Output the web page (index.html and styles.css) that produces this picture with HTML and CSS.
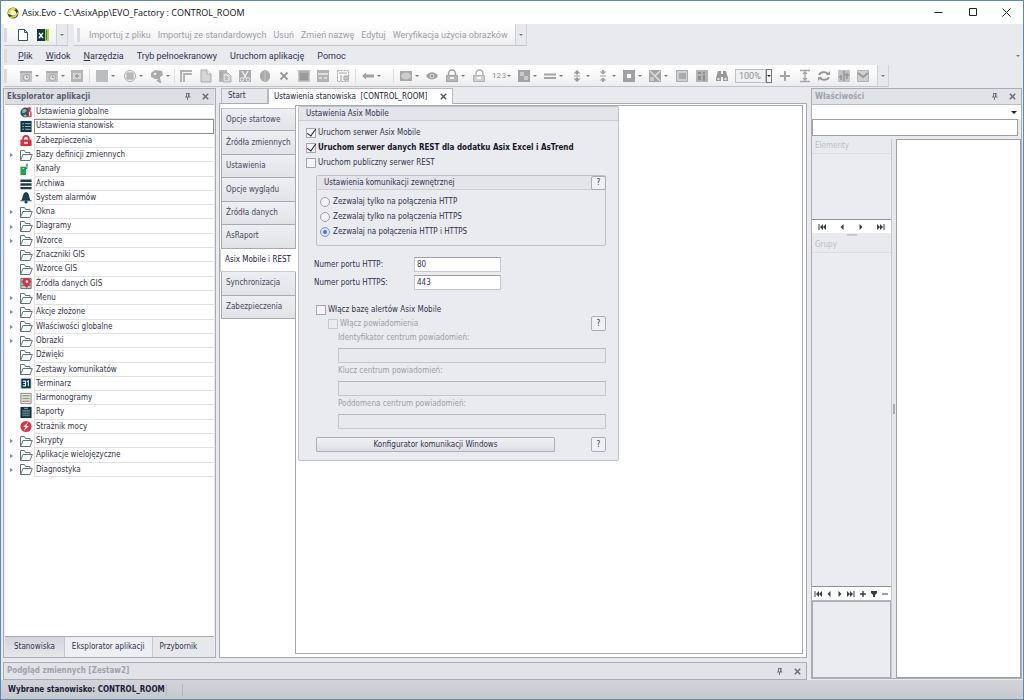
FILE: index.html
```html
<!DOCTYPE html>
<html lang="pl">
<head>
<meta charset="utf-8">
<title>Asix.Evo</title>
<link rel="stylesheet" href="styles.css">
</head>
<body>
<svg class="defs" aria-hidden="true">
  <symbol id="folder" viewBox="0 0 14 13"><path d="M1.500 11.500V1.500h4l1 2h4.500v2M1.500 11.500l2.500-6h9.300l-2.300 6z" fill="#fff" stroke="#5d747e"/></symbol>
  <symbol id="pin" viewBox="0 0 7 7"><path d="M2 0.500h3.500M2.500 0v4M4.500 0v4M5 0v4M1 4h5.500M3.500 4v3" stroke="currentColor" fill="none" stroke-width="0.900"/></symbol>
  <symbol id="x" viewBox="0 0 7 7"><path d="M0.800 0.800l5.400 5.400M6.200 0.800l-5.400 5.400" stroke="currentColor" stroke-width="1.500"/></symbol>
  <symbol id="cal" viewBox="0 0 14 14"><path d="M1 2h12v11H1z" fill="#c3c4c6"/><path d="M1 2h12v2H1z" fill="#adaeb0"/><circle cx="7.500" cy="8.500" r="3.200" fill="#dcdcde" stroke="#a3a4a6"/><path d="M7.500 6.500v2h1.500" stroke="#999" fill="none"/></symbol>
  <symbol id="boxplus" viewBox="0 0 14 14"><path d="M1 1h12v12H1z" fill="#b4b5b7"/><path d="M3 4h8v6H3z" fill="#d6d6d8"/><path d="M5 7h4M7 5v4" stroke="#999" stroke-width="1.500"/></symbol>
  <symbol id="sq" viewBox="0 0 14 14"><path d="M1 1h12v12H1z" fill="#bcbdbf"/></symbol>
  <symbol id="ring" viewBox="0 0 14 14"><circle cx="7" cy="7" r="5.500" fill="none" stroke="#aaabad"/><path d="M4 4h6v6H4z" fill="#d0d0d2" stroke="#a2a3a5"/><path d="M5 6h4M5 8h4" stroke="#a2a3a5"/></symbol>
  <symbol id="tag" viewBox="0 0 14 14"><path d="M1 4l4-3 7 1 1 4-5 4H5L1 8z" fill="#aaabad"/><path d="M8 5l2 8-3-2" fill="none" stroke="#aaabad" stroke-width="2"/><circle cx="5" cy="5" r="1.300" fill="#eee"/></symbol>
  <symbol id="corner" viewBox="0 0 14 14"><path d="M2 13V2h11M5 13V5h8" fill="none" stroke="#b2b3b5" stroke-width="2"/></symbol>
  <symbol id="page" viewBox="0 0 14 14"><path d="M2 1h6l4 4v8H2z" fill="#d5d6d8" stroke="#aaabad"/><path d="M8 1v4h4" fill="#fff" stroke="#aaabad"/></symbol>
  <symbol id="paste" viewBox="0 0 14 14"><path d="M1 1h8v12H1z" fill="#b6b7b9"/><path d="M5 4h5l3 3v6H5z" fill="#ddd" stroke="#aaabad"/><path d="M7 8h3M7 10h3M3 3v7" stroke="#999"/></symbol>
  <symbol id="cut" viewBox="0 0 14 14"><path d="M1 1h12v12H1z" fill="#aaabad"/><path d="M4 2l4 7M10 2L6 9" stroke="#eee" stroke-width="1.500"/><circle cx="4" cy="10.500" r="1.800" fill="none" stroke="#eee"/><circle cx="10" cy="10.500" r="1.800" fill="none" stroke="#eee"/></symbol>
  <symbol id="blob" viewBox="0 0 14 14"><path d="M4 2l3-1 3 1 2 3v4l-2 3-3 1-3-1-2-3V5z" fill="#aaabad"/><path d="M7 2v10" stroke="#c6c6c8"/></symbol>
  <symbol id="del" viewBox="0 0 14 14"><path d="M3.500 3.500l7 7M10.500 3.500l-7 7" stroke="#999a9c" stroke-width="2"/></symbol>
  <symbol id="sel1" viewBox="0 0 14 14"><path d="M1.500 1.500h11v11h-11z" fill="#b0b1b3" stroke="#c5c5c7"/><path d="M3 4h8v7H3z" fill="#999a9c"/></symbol>
  <symbol id="form" viewBox="0 0 14 14"><path d="M1 1h12v12H1z" fill="#b1b2b4"/><path d="M2 5h10M3 9h3M8 9h3" stroke="#eee" stroke-width="1.500"/></symbol>
  <symbol id="dash" viewBox="0 0 14 14"><path d="M1.500 1.500h11v11h-11z" fill="none" stroke="#a5a6a8" stroke-dasharray="2 1"/><path d="M3 4h8M5 6v6M8 7h4v4H8z" stroke="#a5a6a8" fill="#ccc"/></symbol>
  <symbol id="back" viewBox="0 0 14 14"><path d="M1 7l4-3.500v2h8v3H5v2z" fill="#a0a1a3"/></symbol>
  <symbol id="oval" viewBox="0 0 14 14"><path d="M1 2h12v10H1z" fill="#a6a7a9"/><ellipse cx="7" cy="7" rx="5" ry="3.500" fill="#ccc"/></symbol>
  <symbol id="eye" viewBox="0 0 14 14"><path d="M1 7c3-5 9-5 12 0c-3 4.500-9 4.500-12 0z" fill="#a0a1a3"/><circle cx="7" cy="7" r="2.300" fill="#ddd"/><circle cx="7" cy="7" r="1.200" fill="#909193"/></symbol>
  <symbol id="lock" viewBox="0 0 14 14"><path d="M3.500 7V4.500a3.500 3.500 0 0 1 7 0V7" fill="none" stroke="#a0a1a3" stroke-width="1.500"/><path d="M1.500 6.500h11v6h-11z" fill="#b8b9bb" stroke="#a0a1a3"/><path d="M5 9h4" stroke="#eee" stroke-width="2"/></symbol>
  <symbol id="unlock" viewBox="0 0 14 14"><path d="M4 5.500V4.500a3 3 0 0 1 7 0V7" fill="none" stroke="#b0b1b3" stroke-width="1.500"/><path d="M1.500 6.500h11v6h-11z" fill="#d0d1d3" stroke="#b0b1b3"/><path d="M5 9h4" stroke="#fff" stroke-width="2"/></symbol>
  <symbol id="chess" viewBox="0 0 14 14"><path d="M1 1h12v12H1z" fill="#a3a4a6"/><path d="M3 3h4v4H3zM7 7h4v4H7z" fill="#c9cacc"/></symbol>
  <symbol id="eq" viewBox="0 0 14 14"><path d="M1 5.500h12M1 9h12" stroke="#a3a4a6" stroke-width="2"/></symbol>
  <symbol id="vert" viewBox="0 0 14 14"><path d="M7 1l3.500 3.500H8v1H6v-1H3.500zM7 13l3.500-3.500H8v-1H6v1H3.500z" fill="#97989a"/><path d="M4 7h6" stroke="#97989a"/></symbol>
  <symbol id="vert2" viewBox="0 0 14 14"><path d="M7 5.500l3.500-3H8V1H6v1.500H3.500zM7 8.500l3.500 3H8V13H6v-1.500H3.500z" fill="#a0a1a3"/><path d="M4 7h6" stroke="#a0a1a3"/></symbol>
  <symbol id="inner" viewBox="0 0 14 14"><path d="M1 1h12v12H1z" fill="#a0a1a3"/><path d="M5 5h4v4H5z" fill="#fff"/></symbol>
  <symbol id="diag" viewBox="0 0 14 14"><path d="M1 1h12v12H1z" fill="#a3a4a6"/><path d="M2 2l10 10M12 2L7 7" stroke="#e0e0e2" stroke-width="1.500"/><path d="M2 8h4v4H2z" fill="#c9c9cb"/></symbol>
  <symbol id="win" viewBox="0 0 14 14"><path d="M1.500 1.500h11v11h-11z" fill="#cfd0d2" stroke="#aaabad"/><path d="M4 4h7v6H4z" fill="#aaabad"/></symbol>
  <symbol id="set" viewBox="0 0 14 14"><path d="M1 1h12v12H1z" fill="#b3b4b6"/><path d="M3 3h3v2H3zM3 7h3v4H3z" fill="#8f9092"/><path d="M9 3v2M9 6v6" stroke="#8f9092" stroke-width="2"/></symbol>
  <symbol id="bino" viewBox="0 0 14 14"><path d="M3 2h3v3h2V2h3l2 7v3H8V8H6v4H1V9z" fill="#97989a"/><circle cx="3.500" cy="10" r="1.300" fill="#ddd"/><circle cx="10.500" cy="10" r="1.300" fill="#ddd"/></symbol>
  <symbol id="plus" viewBox="0 0 14 14"><path d="M2 7h10M7 2v10" stroke="#a3a4a6" stroke-width="2"/></symbol>
  <symbol id="ibeam" viewBox="0 0 14 14"><path d="M2 1.500h10M2 12.500h10M7 3v8M5 5l2-2 2 2M5 9l2 2 2-2" stroke="#a3a4a6" fill="none" stroke-width="1.300"/></symbol>
  <symbol id="refresh" viewBox="0 0 14 14"><path d="M2 6a5 4 0 0 1 9-1M12 8a5 4 0 0 1-9 1" stroke="#97989a" stroke-width="2" fill="none"/><path d="M9 6h4V2zM5 8H1v4z" fill="#97989a"/></symbol>
  <symbol id="gear" viewBox="0 0 14 14"><path d="M1 1h12v12H1z" fill="#c2c3c5"/><path d="M4 11V6M7 12V2M10 10V4M2 8h3M8 6h4" stroke="#959698" stroke-width="1.500"/></symbol>
  <symbol id="mail" viewBox="0 0 14 14"><path d="M1.500 1.500h11v11h-11z" fill="#cfd0d2" stroke="#b0b1b3"/><path d="M2 4l5 4 5-4" fill="none" stroke="#97989a" stroke-width="2"/></symbol>
  <symbol id="first" viewBox="0 0 8 6"><path d="M1 0v6" stroke="currentColor"/><path d="M5 0v6L2 3zM8 0v6L5 3z" fill="currentColor"/></symbol>
  <symbol id="prev" viewBox="0 0 8 6"><path d="M5.500 0v6L2.500 3z" fill="currentColor"/></symbol>
</svg>

<div class="window">
  <header class="titlebar">
    <svg class="logo" viewBox="0 0 12 12"><circle cx="6" cy="6" r="5.500" fill="#32453c"/><path d="M1 7a5 5 0 0 1 8-5L6 4 4 8z" fill="#e8dc3c"/><circle cx="6.300" cy="6" r="2.800" fill="#f7f6cf"/><path d="M3 10.500l5-1 3-4" stroke="#e8dc3c" stroke-width="1.500" fill="none"/></svg>
    <h1 class="title">Asix.Evo - C:\AsixApp\EVO_Factory : CONTROL_ROOM</h1>
    <div class="winbtns">
      <button aria-label="Minimalizuj"><svg viewBox="0 0 9 9"><path d="M0.500 4.500h8" stroke="#222"/></svg></button>
      <button aria-label="Maksymalizuj"><svg viewBox="0 0 9 9"><path d="M1.500 0.500h7v7h-7z" fill="none" stroke="#222"/></svg></button>
      <button aria-label="Zamknij"><svg viewBox="0 0 9 9"><path d="M0.500 0.500l8 8M8.500 0.500l-8 8" stroke="#222"/></svg></button>
    </div>
  </header>

  <div class="toolrow">
    <div class="strip files">
      <span class="grip"></span>
      <button aria-label="Nowy"><svg viewBox="0 0 14 14"><path d="M2.500 1.500h6l3 3v8h-9z" fill="#fff" stroke="#36505c"/><path d="M8.500 1.500v3h3" fill="none" stroke="#36505c"/></svg></button>
      <button aria-label="Excel"><svg viewBox="0 0 14 14"><path d="M9 1h4v12H9z" fill="#b4d435"/><path d="M10 2h1v10h-1z" fill="#2e8f46"/><path d="M1 1h8v12H1z" fill="#113b4a"/><path d="M3 5l4 5M7 5l-4 5" stroke="#fff" stroke-width="1.300"/></svg></button>
      <button class="more" aria-label="Więcej"><i class="tri"></i></button>
    </div>
    <div class="strip actions">
      <span class="grip"></span>
      <button disabled>Importuj z pliku</button><button disabled>Importuj ze standardowych</button><button disabled>Usuń</button><button disabled>Zmień nazwę</button><button disabled>Edytuj</button><button disabled>Weryfikacja użycia obrazków</button>
      <button class="more" aria-label="Więcej"><i class="tri"></i></button>
    </div>
  </div>

  <nav class="menu">
    <span class="grip"></span>
    <button><u>P</u>lik</button><button><u>W</u>idok</button><button><u>N</u>arzędzia</button><button>Tryb pełnoekranowy</button><button>Uruchom aplikację</button><button>Pomoc</button>
    <i class="tri end"></i>
  </nav>

  <div class="toolrow">
    <div class="strip icons">
      <span class="grip"></span>
      <div class="grp g1"><span class="ic"><svg><use href="#cal"/></svg><i class="tri"></i></span><span class="ic"><svg><use href="#cal"/></svg><i class="tri"></i></span><span class="ic"><svg><use href="#boxplus"/></svg></span></div>
      <div class="grp g2"><span class="ic"><svg><use href="#sq"/></svg><i class="tri"></i></span><span class="ic"><svg><use href="#ring"/></svg><i class="tri"></i></span><span class="ic"><svg><use href="#tag"/></svg><i class="tri"></i></span></div>
      <div class="grp g3"><svg><use href="#corner"/></svg><svg><use href="#page"/></svg><svg><use href="#paste"/></svg><svg><use href="#cut"/></svg><svg><use href="#blob"/></svg><svg><use href="#del"/></svg><svg><use href="#sel1"/></svg><svg><use href="#form"/></svg><svg><use href="#dash"/></svg></div>
      <div class="grp g4"><span class="ic"><svg><use href="#back"/></svg><i class="tri"></i></span></div>
      <div class="grp g5"><span class="ic"><svg><use href="#oval"/></svg><i class="tri"></i></span><svg><use href="#eye"/></svg><span class="ic"><svg><use href="#lock"/></svg><i class="tri"></i></span><svg><use href="#unlock"/></svg><span class="ic num">12<small>3</small><i class="tri"></i></span><span class="ic"><svg><use href="#chess"/></svg><i class="tri"></i></span><span class="ic"><svg><use href="#eq"/></svg><i class="tri"></i></span><span class="ic"><svg><use href="#vert"/></svg><i class="tri"></i></span><span class="ic"><svg><use href="#vert2"/></svg><i class="tri"></i></span><span class="ic"><svg><use href="#inner"/></svg><i class="tri"></i></span><span class="ic"><svg><use href="#diag"/></svg><i class="tri"></i></span><svg><use href="#win"/></svg><svg><use href="#set"/></svg><svg><use href="#bino"/></svg></div>
      <div class="zoom"><input type="text" value="100%" aria-label="Powiększenie" disabled><button aria-label="Zmień powiększenie"><i class="tri dark"></i></button></div>
      <div class="grp g6"><svg><use href="#plus"/></svg><svg><use href="#ibeam"/></svg><svg><use href="#refresh"/></svg><svg><use href="#gear"/></svg><svg><use href="#mail"/></svg></div>
      <button class="more" aria-label="Więcej"><i class="tri"></i></button>
    </div>
  </div>

  <div class="main">
    <div class="leftarea">
      <div class="workspace">
        <aside class="dock explorer">
          <div class="dockhead"><h2>Eksplorator aplikacji</h2><button aria-label="Przypnij"><svg><use href="#pin"/></svg></button><button aria-label="Zamknij"><svg><use href="#x"/></svg></button></div>
          <div class="treebox">
            <ul class="tree">
              <li><svg viewBox="0 0 14 14"><circle cx="6.500" cy="7" r="5.500" fill="#24505f"/><path d="M3 4l3-1 2 2-2 2-3 1zM4 10l3-1 1 2-2 1z" fill="#8fb5c0"/><path d="M9 6h4v6H9z" fill="#e23440"/><circle cx="10.500" cy="3" r="2" fill="#e23440"/><path d="M11 6v5" stroke="#fff"/></svg><span>Ustawienia globalne</span></li>
              <li class="cur"><svg viewBox="0 0 14 14"><path d="M1 1h12v12H1z" fill="#143444"/><path d="M3 4h2M6 4h6M3 7h2M6 7h6M3 10h2M6 10h6" stroke="#9fc0cc"/></svg><span>Ustawienia stanowisk</span></li>
              <li><svg viewBox="0 0 14 14"><path d="M4 7V5a3 3 0 0 1 6 0v2" fill="none" stroke="#d9303c" stroke-width="2"/><path d="M1 6h12v7H1z" fill="#e02c3a"/><path d="M5 9.500h4" stroke="#fff" stroke-width="2"/></svg><span>Zabezpieczenia</span></li>
              <li class="sub"><svg><use href="#folder"/></svg><span>Bazy definicji zmiennych</span></li>
              <li><svg viewBox="0 0 14 14"><path d="M1 4h6v9H1z" fill="#1aa64c"/><path d="M6 6h2V2.500" fill="none" stroke="#35616f"/><circle cx="8" cy="1.800" r="1.300" fill="#7a98a2"/><path d="M3 6h2" stroke="#bdf0c8"/></svg><span>Kanały</span></li>
              <li><svg viewBox="0 0 14 14"><path d="M1 4h12M1 8h12M1 12h12" stroke="#1d3c4a" stroke-width="2.600"/></svg><span>Archiwa</span></li>
              <li><svg viewBox="0 0 14 14"><path d="M7 1c4 1 3 6 5 9H2c2-3 1-8 5-9z" fill="#153f4f"/><path d="M1 10.500h12" stroke="#153f4f"/><circle cx="7" cy="12" r="1.500" fill="#153f4f"/></svg><span>System alarmów</span></li>
              <li class="sub"><svg><use href="#folder"/></svg><span>Okna</span></li>
              <li class="sub"><svg><use href="#folder"/></svg><span>Diagramy</span></li>
              <li class="sub"><svg><use href="#folder"/></svg><span>Wzorce</span></li>
              <li><svg><use href="#folder"/></svg><span>Znaczniki GIS</span></li>
              <li><svg><use href="#folder"/></svg><span>Wzorce GIS</span></li>
              <li><svg viewBox="0 0 14 14"><path d="M1.500 1.500h11v11h-11z" fill="#c9d0d4" stroke="#4f6770"/><path d="M2 5h10M2 9h10" stroke="#4f6770"/><path d="M3 5a4.500 4 0 0 1 9 0c0 3-3 4-4 7-2-3-5-4-5-7z" fill="#e02c3a"/><circle cx="8" cy="5" r="1.600" fill="#fff"/></svg><span>Źródła danych GIS</span></li>
              <li class="sub"><svg><use href="#folder"/></svg><span>Menu</span></li>
              <li class="sub"><svg><use href="#folder"/></svg><span>Akcje złożone</span></li>
              <li class="sub"><svg><use href="#folder"/></svg><span>Właściwości globalne</span></li>
              <li class="sub"><svg><use href="#folder"/></svg><span>Obrazki</span></li>
              <li><svg><use href="#folder"/></svg><span>Dźwięki</span></li>
              <li><svg><use href="#folder"/></svg><span>Zestawy komunikatów</span></li>
              <li><svg viewBox="0 0 14 14"><path d="M1 1h12v12H1z" fill="#b9d0da"/><path d="M2 2h10v10H2z" fill="#0e2f3f"/><path d="M3.500 4.500h3v5h-3M4 7h2M9.500 10V4l-1.500 1" fill="none" stroke="#e8f4f8" stroke-width="1.200"/></svg><span>Terminarz</span></li>
              <li><svg viewBox="0 0 14 14"><path d="M1.500 1.500h11v11h-11z" fill="#e6ece6" stroke="#78868a"/><path d="M3 4h8" stroke="#d98080" stroke-width="1.500"/><path d="M3 7h8" stroke="#6cb67a" stroke-width="1.500"/><path d="M3 10h8" stroke="#d98080" stroke-width="1.500"/></svg><span>Harmonogramy</span></li>
              <li><svg viewBox="0 0 14 14"><path d="M1 1h12v12H1z" fill="#12303e"/><path d="M3 4h8v7H3z" fill="#5b7c88"/><path d="M5 2.500h4" stroke="#9fc0cc"/><path d="M3 6.500h8M3 9h8" stroke="#2b4b58"/></svg><span>Raporty</span></li>
              <li><svg viewBox="0 0 14 14"><circle cx="7" cy="7" r="6" fill="#df3440"/><path d="M9.500 2L4 7.500h2.500L4.500 12 10 6.500H7.500z" fill="#fff"/></svg><span>Strażnik mocy</span></li>
              <li class="sub"><svg><use href="#folder"/></svg><span>Skrypty</span></li>
              <li class="sub"><svg><use href="#folder"/></svg><span>Aplikacje wielojęzyczne</span></li>
              <li class="sub"><svg><use href="#folder"/></svg><span>Diagnostyka</span></li>
            </ul>
          </div>
          <div class="docktabs"><button>Stanowiska</button><button class="on">Eksplorator aplikacji</button><button>Przybornik</button></div>
        </aside>

        <section class="doc">
          <div class="doctabs"><button class="dt">Start</button><button class="dt on">Ustawienia stanowiska&nbsp; [CONTROL_ROOM]<svg><use href="#x"/></svg></button></div>
          <div class="docbody">
            <nav class="vtabs"><button>Opcje startowe</button><button>Źródła zmiennych</button><button>Ustawienia</button><button>Opcje wyglądu</button><button>Źródła danych</button><button>AsRaport</button><button class="on">Asix Mobile i REST</button><button>Synchronizacja</button><button>Zabezpieczenia</button></nav>
            <div class="page">
              <form class="group">
                <h3 class="grouphead">Ustawienia Asix Mobile</h3>
                <div class="checks">
                  <label><input type="checkbox" checked>Uruchom serwer Asix Mobile</label>
                  <label class="strong"><input type="checkbox" checked>Uruchom serwer danych REST dla dodatku Asix Excel i AsTrend</label>
                  <label><input type="checkbox">Uruchom publiczny serwer REST</label>
                </div>
                <div class="inner">
                  <section class="subgroup">
                    <div class="subhead"><h4>Ustawienia komunikacji zewnętrznej</h4><button type="button" class="help">?</button></div>
                    <div class="radios">
                      <label><input type="radio" name="mode">Zezwalaj tylko na połączenia HTTP</label>
                      <label><input type="radio" name="mode">Zezwalaj tylko na połączenia HTTPS</label>
                      <label><input type="radio" name="mode" checked>Zezwalaj na połączenia HTTP i HTTPS</label>
                    </div>
                  </section>
                  <div class="ports">
                    <label for="http">Numer portu HTTP:</label><input id="http" type="text" value="80">
                    <label for="https">Numer portu HTTPS:</label><input id="https" type="text" value="443">
                  </div>
                  <label class="alerts"><input type="checkbox">Włącz bazę alertów Asix Mobile</label>
                  <div class="notify">
                    <div class="line"><label><input type="checkbox" disabled>Włącz powiadomienia</label><button type="button" class="help">?</button></div>
                    <div class="fields">
                      <label for="f1">Identyfikator centrum powiadomień:</label><input id="f1" type="text" disabled>
                      <label for="f2">Klucz centrum powiadomień:</label><input id="f2" type="text" disabled>
                      <label for="f3">Poddomena centrum powiadomień:</label><input id="f3" type="text" disabled>
                    </div>
                  </div>
                  <div class="line last"><button type="button" class="conf">Konfigurator komunikacji Windows</button><button type="button" class="help">?</button></div>
                </div>
              </form>
            </div>
          </div>
        </section>
      </div>
      <div class="dock preview">
        <div class="dockhead off"><h2>Podgląd zmiennych [Zestaw2]</h2><button aria-label="Przypnij"><svg><use href="#pin"/></svg></button><button aria-label="Zamknij"><svg><use href="#x"/></svg></button></div>
      </div>
    </div>

    <aside class="dock props">
      <div class="dockhead off"><h2>Właściwości</h2><button aria-label="Przypnij"><svg><use href="#pin"/></svg></button><button aria-label="Zamknij"><svg><use href="#x"/></svg></button></div>
      <div class="combo"><select aria-label="Obiekt"><option></option></select><i class="tri dark"></i></div>
      <input class="search" type="text" aria-label="Szukaj">
      <div class="propbody">
        <div class="lists">
          <h4>Elementy</h4>
          <div class="area elements"></div>
          <div class="navi"><svg><use href="#first"/></svg><svg><use href="#prev"/></svg><svg class="flip"><use href="#prev"/></svg><svg class="flip"><use href="#first"/></svg></div>
          <div class="handle"></div>
          <h4>Grupy</h4>
          <div class="area groups"></div>
          <div class="navi dense"><svg><use href="#first"/></svg><svg><use href="#prev"/></svg><svg class="flip"><use href="#prev"/></svg><svg class="flip"><use href="#first"/></svg><svg viewBox="0 0 8 6"><path d="M1 3h6M4 0v6" stroke="currentColor" stroke-width="1.400"/></svg><svg viewBox="0 0 8 6"><path d="M1 0h6v2L5 4v2H3V4L1 2z" fill="currentColor"/></svg><svg viewBox="0 0 8 6"><path d="M1 3h6" stroke="currentColor"/></svg></div>
          <div class="area info"></div>
        </div>
        <div class="split"></div>
        <div class="sheet"></div>
      </div>
    </aside>
  </div>

  <footer class="status"><b>Wybrane stanowisko: CONTROL_ROOM</b><span></span><span></span></footer>
</div>
</body>
</html>
```
FILE: styles.css
```css
* { box-sizing: border-box; }
body { margin: 0; font: 8px/12px "DejaVu Sans Condensed", "DejaVu Sans", sans-serif; color: #32324a; }
button, input, select { font: inherit; color: inherit; margin: 0; padding: 0; border-radius: 0; }
button { background: none; border: 0; white-space: nowrap; }
h1, h2, h3, h4, ul { margin: 0; padding: 0; font-size: inherit; font-weight: normal; }
.defs { position: absolute; width: 0; height: 0; }

.window { display: flex; flex-direction: column; height: 100vh; background: #e9eaee; border: 1px solid #5d8ab5; }
.titlebar { display: flex; align-items: center; flex: none; height: 23px; padding-left: 6px; background: #fff; }
.logo { width: 12px; height: 12px; }
.title { flex: 1; margin-left: 3px; font: 9px/14px "Open Sans", sans-serif; color: #111; }
.winbtns { display: flex; }
.winbtns button { width: 34px; height: 20px; display: grid; place-items: center; }
.winbtns svg { width: 9px; height: 9px; }

.tri { flex: none; width: 0; height: 0; border: 2px solid transparent; border-top-color: #77787c; border-bottom: 0; }
.tri.dark { border-width: 3px 3px 0; border-top-color: #222; }
.grip { flex: none; width: 3px; height: 14px; background: #dadbdf; }
.toolrow { display: flex; flex: none; gap: 6px; height: 22px; padding-left: 3px; font: 9px/14px Roboto, sans-serif; }
.strip { display: flex; align-items: center; background: linear-gradient(#fff, #f6f6f7 60%, #ececee); border-bottom: 1px solid #c3c4c8; border-right: 1px solid #d2d3d7; }
.strip svg { width: 14px; height: 14px; flex: none; }
.files { width: 64px; }
.files button { width: 20px; height: 20px; display: grid; place-items: center; }
.files .grip { margin-right: 6px; }
.more, .files .more { display: grid; place-items: center; align-self: stretch; width: 11px; height: auto; margin-left: auto; background: #e8e9ed; border-left: 1px solid #d0d1d5; }
.actions .grip { margin: 0 9px 0 3px; }
.actions button:disabled { margin-right: 7px; color: #9c9da3; }
.actions .more { margin-left: 0; }
.menu { display: flex; align-items: center; flex: none; height: 19px; padding: 0 3px; font: 9px/14px Roboto, sans-serif; }
.menu button { margin-left: 13px; }
.menu .grip + button { margin-left: 11px; }
.menu .end { margin-left: auto; }

.icons { width: 885px; }
.grp { display: flex; align-items: center; justify-content: space-between; flex: none; }
.ic { display: flex; align-items: center; gap: 2px; }
.g1 { width: 65px; margin-left: 12px; }
.g2 { width: 75px; }
.g3 { width: 171px; }
.g4 { width: 27px; }
.g5 { width: 330px; }
.g6 { width: 92px; margin-left: 5px; }
.g2, .g3, .g4, .g5 { border-left: 1px solid #dcdde1; box-sizing: content-box; padding-left: 5px; margin-left: 5px; }
.g3 { padding-left: 4px; margin-left: 4px; }
.num { gap: 1px; color: #8b8c90; font: 8px/12px Roboto, sans-serif; }
.num small { font-size: 7px; }
.zoom { display: flex; width: 38px; height: 14px; flex: none; margin-left: 6px; }
.zoom input { width: 31px; padding-left: 3px; border: 1px solid #bfc0c4; background: #f0f1f3; color: #8e8f94; }
.zoom button { width: 6px; border: 1px solid #77787c; display: grid; place-items: center; }
.zoom .tri { border-width: 2px 2px 0; }

.main { display: flex; flex: 1; min-height: 0; gap: 4px; padding: 1px 1px 0 2px; }
.leftarea { display: flex; flex-direction: column; flex: 1; min-width: 0; gap: 4px; }
.workspace { display: flex; flex: 1; min-height: 0; gap: 3px; }
.dock { border: 1px solid #aaabb3; }
.dockhead { display: flex; align-items: center; flex: none; height: 16px; padding: 0 5px 0 3px; gap: 11px; background: #dddee3; border-bottom: 1px solid #bcbdc4; color: #5b5c6b; }
.dockhead h2 { flex: 1; font-weight: bold; }
.dockhead button { display: grid; place-items: center; width: 7px; height: 12px; }
.dockhead svg { width: 7px; height: 7px; color: #6b6c78; }
.dockhead.off { background: #e2e3e8; }
.dockhead.off h2 { color: #a0a1a9; }

.explorer { display: flex; flex-direction: column; width: 213px; padding: 0 1px; }
.explorer .dockhead { padding-left: 2px; }
.treebox { flex: 1; min-height: 0; overflow: hidden; background: #fff; border-bottom: 1px solid #aaabb3; }
.tree { display: grid; grid-auto-rows: 1fr; height: 372px; list-style: none; }
.tree li { display: flex; align-items: center; padding-left: 14px; min-height: 0; position: relative; }
.tree li > svg { width: 14px; height: 13px; flex: none; }
.tree span { flex: 1; align-self: stretch; margin-left: 1px; padding-left: 1px; border: 1px solid #e1e2e6; border-width: 0 0 1px 1px; line-height: 13px; }
.tree .cur span { border: 1px solid #8c8d94; line-height: 12px; }
.sub::before { content: ""; position: absolute; left: 5px; border: 2px solid transparent; border-left: 3px solid #7b8b94; border-right: 0; }
.docktabs { display: flex; height: 20px; flex: none; }
.docktabs button { padding: 0 9px; border-right: 1px solid #c4c5cb; background: linear-gradient(#d4d5db, #e6e7eb); }
.docktabs button:last-child { flex: 1; text-align: left; padding-left: 7px; border-right: 0; background: #e7e8ec; }
.docktabs .on { padding: 0 7px; background: #eeeff2; }

.doc { display: flex; flex-direction: column; flex: 1; min-width: 0; }
.doctabs { display: flex; height: 16px; flex: none; padding-left: 2px; border-bottom: 1px solid #a9aab1; }
.dt { height: 15px; width: 47px; padding-left: 6px; text-align: left; background: #e6e7eb; border: 1px solid #b8b9c0; border-bottom: 0; }
.dt.on { display: flex; align-items: center; justify-content: space-between; width: 185px; height: 16px; padding: 0 5px; background: #fff; color: #22223a; flex: none; }
.dt svg { width: 7px; height: 7px; color: #555663; }
.docbody { display: flex; flex: 1; min-height: 0; padding: 1px 3px 3px 1px; background: #fff; border: 1px solid #a9aab1; border-top: 0; }
.vtabs { display: grid; grid-auto-rows: 1fr; width: 75px; height: 211px; margin-top: 3px; flex: none; }
.vtabs button { text-align: left; padding-left: 4px; color: #46475a; background: linear-gradient(#eeeff2, #e2e3e7); border: 1px solid #a9aab1; border-top: 0; }
.vtabs button:first-child { border-top: 1px solid #c2c3ca; }
.vtabs .on { position: relative; margin-left: -1px; background: #fff; border-color: #c9cad0; border-right-color: #fff; color: #22223a; }
.page { flex: 1; min-width: 0; margin-left: -1px; padding: 0 2px; border: 1px solid #a9aab1; }

.group { width: 321px; background: #eaebef; border: 1px solid #bfc0c8; border-radius: 2px; padding-bottom: 8px; }
.grouphead { height: 14px; padding-left: 7px; line-height: 13px; background: #e4e5ea; border-bottom: 1px solid #cdced4; }
.checks { display: grid; grid-auto-rows: 15px; padding: 4px 0 0 7px; }
label { display: flex; align-items: center; }
.strong { font-weight: bold; color: #15152a; }
input[type="checkbox"] { appearance: none; width: 10px; height: 10px; margin-right: 2px; flex: none; border: 1px solid #a4a5ad; background: #f4f4f7; display: grid; place-items: center; }
input[type="checkbox"]:checked::before { content: ""; width: 4px; height: 8px; margin-top: -3px; border: solid #1a1a26; border-width: 0 1px 1px 0; transform: rotate(35deg); }
input[type="checkbox"]:disabled { border-color: #c8c9cf; background: #ececf0; }
input[type="radio"] { appearance: none; width: 10px; height: 10px; margin-right: 3px; border: 1px solid #9d9ea6; border-radius: 50%; background: #f4f4f7; display: grid; place-items: center; }
input[type="radio"]:checked { border-color: #7e96ce; background: #dce6fb; }
input[type="radio"]:checked::before { content: ""; width: 4px; height: 4px; border-radius: 50%; background: #5577bd; }
.inner { padding: 5px 12px 0 17px; }
.subgroup { border: 1px solid #bfc0c8; border-radius: 2px; height: 71px; }
.subhead { display: flex; height: 14px; padding-left: 7px; align-items: center; background: #e4e5ea; border-bottom: 1px solid #cdced4; }
.subhead h4 { flex: 1; }
.help { width: 15px; height: 15px; flex: none; border: 1px solid #aaabb3; border-radius: 2px; background: #f0f1f4; line-height: 12px; }
.subhead .help { margin-right: -1px; height: 14px; }
.radios { display: grid; grid-auto-rows: 15px; padding: 4px 0 0 3px; }
.ports { display: grid; grid-template-columns: 100px 87px; grid-auto-rows: 15px; row-gap: 3px; margin: 11px 0 0 -2px; }
.inner input[type="text"] { height: 15px; min-width: 0; padding-left: 2px; border: 1px solid #c6c7ce; border-top-color: #9d9ea6; background: #fff; }
.alerts { height: 14px; margin-top: 13px; }
.notify { padding-left: 12px; color: #9c9da6; }
.line { display: flex; align-items: center; justify-content: space-between; }
.line .help, .last { color: #32324a; }
.notify .line { height: 13px; }
.fields { padding-left: 10px; }
.fields label { height: 18px; padding-bottom: 2px; }
.fields input[type="text"] { display: block; width: 100%; border-color: #c6c7ce; border-top-color: #b5b6be; background: #e8e9ed; }
.last { margin-top: 8px; }
.conf { width: 239px; height: 15px; border: 1px solid #adaeb6; border-radius: 1px; background: linear-gradient(#f2f2f5, #dddee4); }

.preview .dockhead { border-bottom: 0; }

.props { display: flex; flex-direction: column; width: 211px; flex: none; margin-bottom: 1px; }
.combo { display: flex; align-items: center; height: 14px; flex: none; background: #fff; padding-right: 4px; }
.combo select { appearance: none; flex: 1; height: 14px; border: 0; background: #fff; }
.search { width: auto; height: 17px; margin: 0 3px 3px 0; flex: none; border: 1px solid #9fa0a6; background: #fff; }
.propbody { display: flex; flex: 1; min-height: 0; }
.lists { display: flex; flex-direction: column; width: 80px; flex: none; border-right: 1px solid #c9cad0; }
.lists h4 { height: 15px; padding-left: 3px; line-height: 14px; color: #bcbdc4; border-bottom: 1px solid #dddee2; flex: none; }
.area { background: #ebecef; flex: none; }
.elements { height: 65px; }
.groups { flex: 1; }
.info { height: 77px; border: 1px solid #aaabb3; }
.navi { display: flex; align-items: center; justify-content: space-between; height: 14px; padding: 0 6px; flex: none; background: #fff; border-top: 1px solid #8f9097; color: #3b3c42; }
.navi.dense { padding: 0 2px; border-bottom: 1px solid #b5b6bc; height: 15px; }
.navi svg { width: 8px; height: 6px; }
.flip { transform: scaleX(-1); }
.handle { width: 10px; height: 2px; margin: 1px auto 2px; background: #c9cad0; flex: none; }
.split { width: 4px; flex: none; background: linear-gradient(#aaabb3, #aaabb3) center / 2px 10px no-repeat, #e6e7eb; }
.sheet { flex: 1; background: #fff; border: 1px solid #9fa0a6; }

.status { display: flex; align-items: center; flex: none; height: 19px; padding-left: 7px; background: linear-gradient(#d3d4d9, #c8c9cf); color: #20203a; }
.status span { height: 12px; width: 16px; border-left: 1px solid #b4b5bc; }
.status b + span { margin-left: 1px; }
```
